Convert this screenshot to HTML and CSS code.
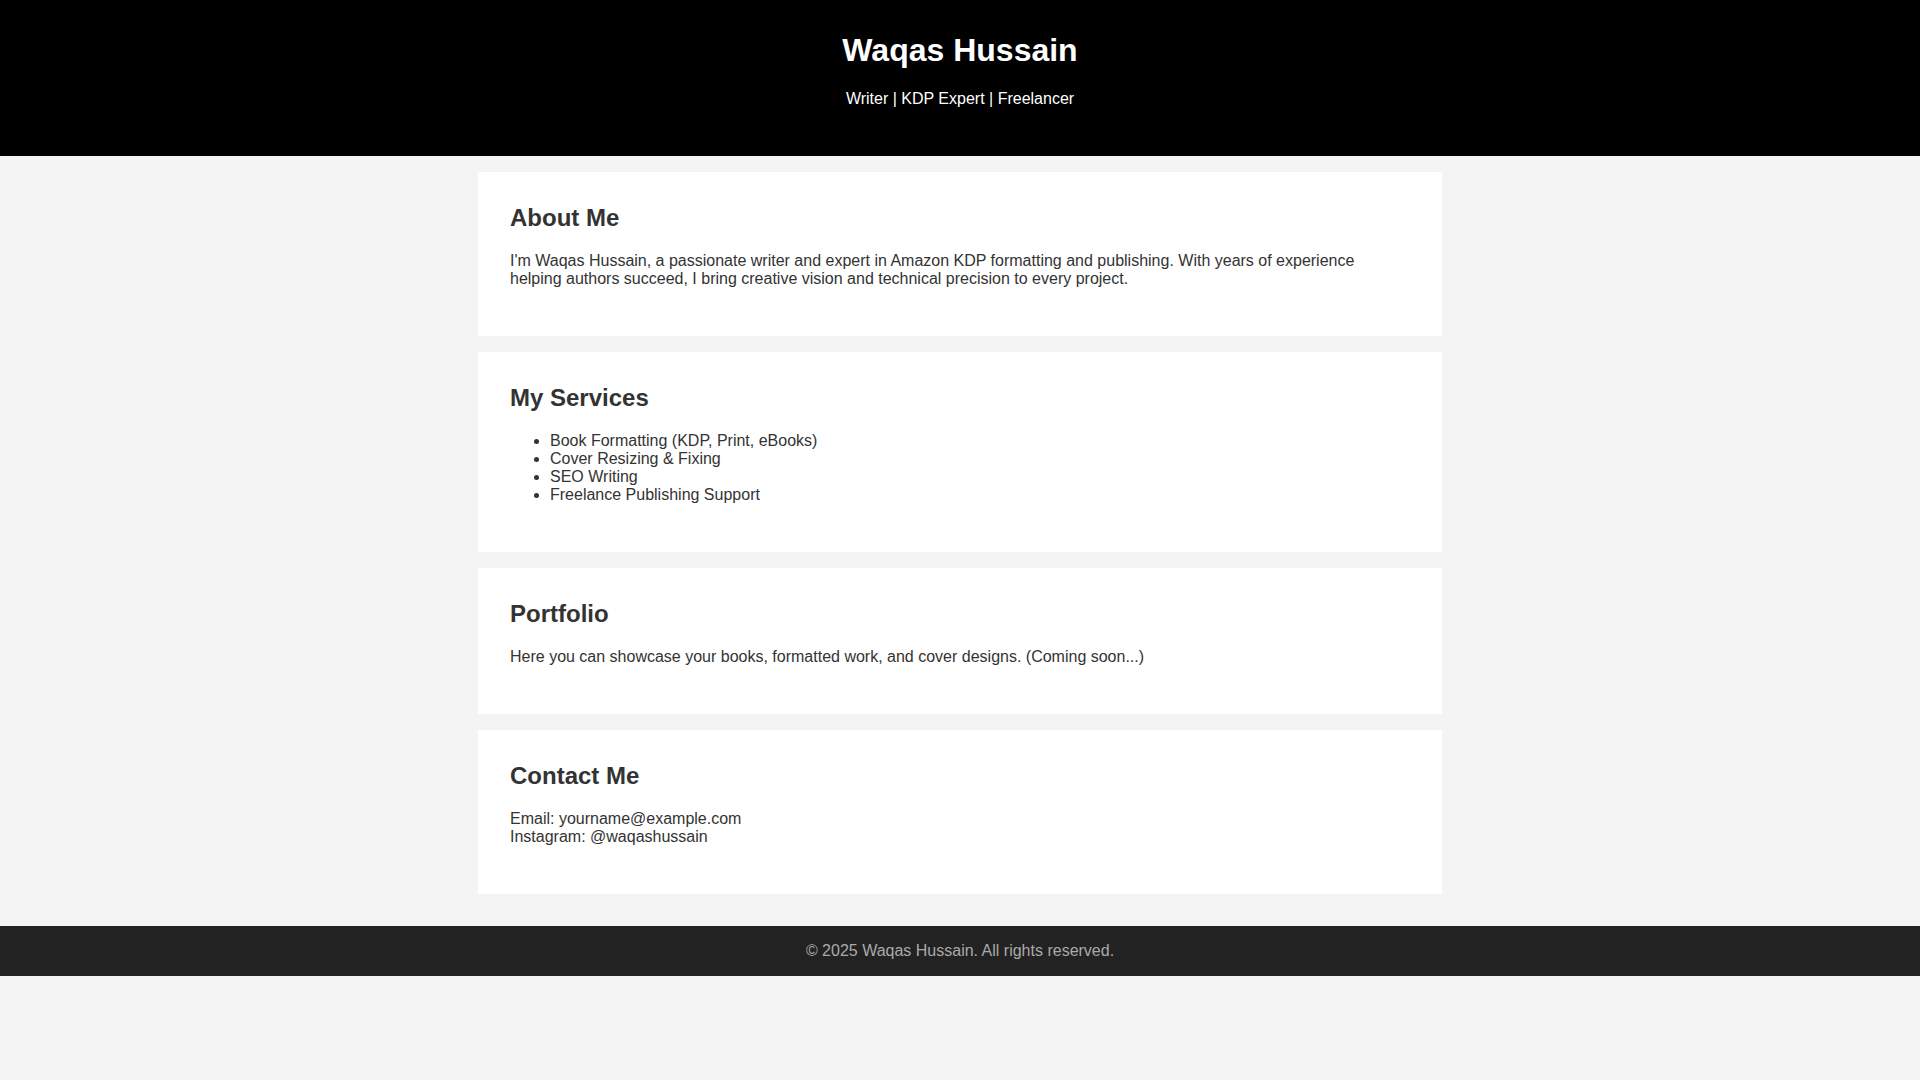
FILE: index.html
```html
<!DOCTYPE html>
<html lang="en">
<head>
<meta charset="UTF-8">
<title>Waqas Hussain</title>
<link rel="stylesheet" href="styles.css">
</head>
<body>
<header class="site-header">
  <h1 class="site-title">Waqas Hussain</h1>
  <p class="site-tagline">Writer | KDP Expert | Freelancer</p>
</header>
<main class="content">
  <section class="card">
    <h2 class="card-title">About Me</h2>
    <p class="card-text">I'm Waqas Hussain, a passionate writer and expert in Amazon KDP formatting and publishing. With years of experience helping authors succeed, I bring creative vision and technical precision to every project.</p>
  </section>
  <section class="card">
    <h2 class="card-title">My Services</h2>
    <ul class="card-list">
      <li>Book Formatting (KDP, Print, eBooks)</li>
      <li>Cover Resizing &amp; Fixing</li>
      <li>SEO Writing</li>
      <li>Freelance Publishing Support</li>
    </ul>
  </section>
  <section class="card">
    <h2 class="card-title">Portfolio</h2>
    <p class="card-text">Here you can showcase your books, formatted work, and cover designs. (Coming soon...)</p>
  </section>
  <section class="card">
    <h2 class="card-title">Contact Me</h2>
    <p class="card-text">Email: yourname@example.com<br>Instagram: @waqashussain</p>
  </section>
</main>
<footer class="site-footer">
  <p class="footer-text">&copy; 2025 Waqas Hussain. All rights reserved.</p>
</footer>
</body>
</html>
```

FILE: styles.css
```css
html, body {
  margin: 0;
  padding: 0;
}

body {
  background: #f4f4f4;
  color: #333;
  font-family: "Liberation Sans", Arial, sans-serif;
  font-size: 16px;
}

.site-header {
  background: #000;
  color: #fff;
  text-align: center;
  padding: 32px 20px;
}

.site-title {
  margin: 0 0 21px;
  font-size: 32px;
  font-weight: bold;
}

.site-tagline {
  margin: 0 0 16px;
}

.content {
  display: flex;
  flex-direction: column;
  gap: 16px;
  max-width: 964px;
  margin: 0 auto;
  padding: 16px 0 32px;
  box-sizing: border-box;
}

.card {
  background: #fff;
  padding: 32px;
}

.card-title {
  margin: 0 0 20px;
  font-size: 24px;
  font-weight: bold;
}

.card-text {
  margin: 0 0 16px;
}

.card-list {
  margin: 0 0 16px;
  padding-left: 40px;
}

.site-footer {
  background: #222;
  color: #aaa;
  text-align: center;
  padding: 16px;
}

.footer-text {
  margin: 0;
}
```
